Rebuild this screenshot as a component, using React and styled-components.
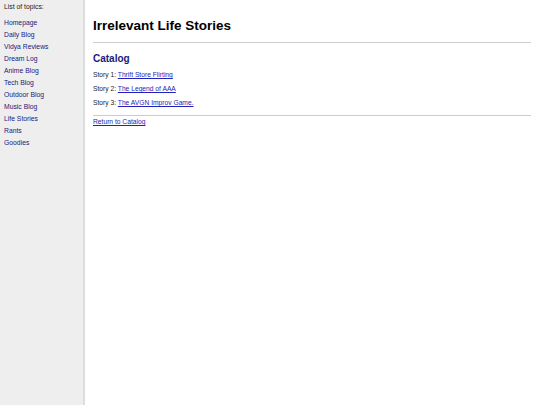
import styled, { createGlobalStyle } from "styled-components"

const Global = createGlobalStyle`
    html, body {
        margin: 0;
        padding: 0;
        background: #fff;
        font-family: "Liberation Sans", Arial, sans-serif;
    }
`
const Page = styled.div`
    display: flex;
    min-height: 405px;
`
const Sidebar = styled.nav`
    width: 85px;
    flex-shrink: 0;
    background: #eeeeee;
    border-right: 2px solid #dddddd;
    padding: 3px 0 0 4px;
    box-sizing: border-box;
    font-size: 6.8px;
`
const SideTitle = styled.div`
    color: #222;
    line-height: 8px;
    margin-bottom: 6px;
`
const SideLink = styled.a`
    display: block;
    color: #1a1a7a;
    text-decoration: none;
    line-height: 12px;
`
const Main = styled.main`
    flex: 1;
    padding: 0 9px 0 8px;
`
const Title = styled.h1`
    font-size: 13.5px;
    font-weight: bold;
    color: #000;
    margin: 18px 0 0;
    line-height: 16px;
`
const Rule = styled.hr`
    border: none;
    border-top: 1px solid #cccccc;
    margin: ${props => props.top}px 0 0;
`
const Heading = styled.h2`
    font-size: 10px;
    font-weight: bold;
    color: #1a1a7a;
    margin: 10px 0 0;
    line-height: 12px;
`
const Story = styled.p`
    font-size: 6.7px;
    color: #222;
    margin: ${props => props.top}px 0 0;
    line-height: 8px;
`
const Link = styled.a`
    color: #2222bb;
    text-decoration: underline;
`

const topics = ["Homepage", "Daily Blog", "Vidya Reviews", "Dream Log", "Anime Blog", "Tech Blog", "Outdoor Blog", "Music Blog", "Life Stories", "Rants", "Goodies"]
const stories = ["Thrift Store Flirting", "The Legend of AAA", "The AVGN Improv Game."]

const App = () => {
  return (
    <Page>
        <Global />
        <Sidebar>
            <SideTitle>List of topics:</SideTitle>
            {topics.map(t => <SideLink href="#" key={t}>{t}</SideLink>)}
        </Sidebar>
        <Main>
            <Title>Irrelevant Life Stories</Title>
            <Rule top={8} />
            <Heading>Catalog</Heading>
            {stories.map((s, i) => (
                <Story key={s} top={6}>
                    Story {i + 1}: <Link href="#">{s}</Link>
                </Story>
            ))}
            <Rule top={8} />
            <Story top={2}><Link href="#">Return to Catalog</Link></Story>
        </Main>
    </Page>
  )
}

export default App
